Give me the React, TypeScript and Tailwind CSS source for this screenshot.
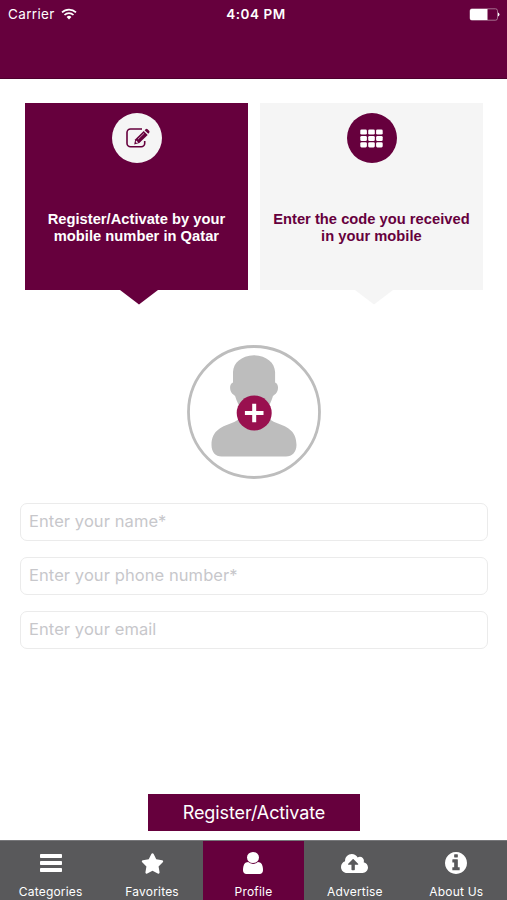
import React from "react";
import { FaCloudUploadAlt, FaStar } from "react-icons/fa";

interface StepCardProps {
  active?: boolean;
  icon: React.ReactNode;
  lines: string[];
}

interface TabProps {
  label: string;
  active?: boolean;
  icon: React.ReactNode;
}

const StatusBar: React.FunctionComponent = () => (
  <div className="grid grid-cols-3 items-center h-[27px] pl-2 pr-[7px] text-white">
    <div className="flex items-center gap-[6px]">
      <span className="text-[13.5px] leading-7 tracking-[0.35px]">Carrier</span>
      <svg width="16" height="12" viewBox="0 0 16 12" fill="none">
        <path d="M1 4.400a10 10 0 0 1 14 0" stroke="currentColor" strokeWidth="1.700" />
        <path d="M3.500 7a6.400 6.400 0 0 1 9 0" stroke="currentColor" strokeWidth="1.700" />
        <path d="M8 11.400 5.600 9a3.400 3.400 0 0 1 4.800 0z" fill="currentColor" />
      </svg>
    </div>
    <span className="pl-[4px] text-center text-[13.5px] leading-7 font-semibold tracking-[0.55px] whitespace-nowrap">
      4:04 PM
    </span>
    <svg className="justify-self-end" width="31" height="13" viewBox="0 0 31 13">
      <rect x="1" y="0.800" width="27.500" height="11.400" rx="2" fill="none" stroke="#b58aa3" strokeWidth="0.800" />
      <path d="M2.500 1H18.500v11H2.500A1.500 1.500 0 0 1 1 10.500v-8A1.500 1.500 0 0 1 2.500 1z" fill="#fff" />
      <path d="M29 4.500a2.100 2.100 0 0 1 0 4z" fill="#fff" />
    </svg>
  </div>
);

const EditIcon: React.FunctionComponent = () => (
  <svg className="ml-[3px]" width="26" height="22" viewBox="0 0 26 22" fill="none">
    <path
      d="M17 2H5.500A3.500 3.500 0 0 0 2 5.500v10.800a3.500 3.500 0 0 0 3.500 3.500h10.700a3.500 3.500 0 0 0 3.500-3.500V14"
      stroke="#66003d"
      strokeWidth="1.600"
    />
    <path d="m10.300 12.300 8.400-8.200 4 3.800-8.400 8.200-5.100 1.400z" fill="#66003d" />
    <path d="m19.600 3.200 1-.9q1-.9 2 0l1.500 1.400q1 1 .1 2l-.9 1z" fill="#66003d" />
    <path d="m12.900 12.300 6.200-6.100" stroke="#d9bfce" strokeWidth="0.800" />
    <path d="m11.200 13.500 2 2-1.600.5-.9-.9z" fill="#f5f5f5" />
  </svg>
);

const KeypadIcon: React.FunctionComponent = () => (
  <svg width="23" height="19" viewBox="0 0 23 19" fill="#fff">
    {[0.5, 6.9, 13.3].map((y) =>
      [0.3, 8.2, 16.1].map((x) => (
        <rect key={`${x}-${y}`} x={x} y={y} width="6.600" height="5.100" rx="1.300" />
      ))
    )}
  </svg>
);

const StepCard: React.FunctionComponent<StepCardProps> = ({
  active,
  icon,
  lines,
}) => (
  <div
    className={`relative flex flex-col items-center w-[222.5px] h-[187px] pt-[10px] ${
      active ? "bg-[#66003d] text-white" : "bg-[#f5f5f5] text-[#66003d]"
    }`}
  >
    <div
      className={`flex items-center justify-center size-[50px] ml-px rounded-full ${
        active ? "bg-[#f5f5f5]" : "bg-[#66003d]"
      }`}
    >
      {icon}
    </div>
    <div className="mt-[48px] text-center font-['Liberation_Sans'] font-bold text-[14.7px] leading-[17px] tracking-[0.02px] whitespace-nowrap">
      {lines.map((line) => (
        <p key={line}>{line}</p>
      ))}
    </div>
    <svg
      className="absolute top-full left-[95px]"
      width="38"
      height="15"
      viewBox="0 0 38 15"
    >
      <path d="M0 0h38L19 14.500z" className={active ? "fill-[#66003d]" : "fill-[#f5f5f5]"} />
    </svg>
  </div>
);

const Avatar: React.FunctionComponent = () => (
  <svg width="134" height="134" viewBox="0 0 134 134">
    <circle cx="67" cy="67" r="65.500" fill="#fff" stroke="#bdbdbd" strokeWidth="2.800" />
    <path
      d="M67 10.300C54 10.800 46.500 18 46 27v10.500c-4.500 1.500-3.500 10.500 1 12.500.8.500 1.300 1 1.600 2.500C50.500 59 54 62 54 67c0 6-3 8.500-8 10.500-10 4-21.500 7-21.500 22.500 0 7 4 11.500 10 11.500H99c6 0 10.500-4.500 10.500-11.500 0-15.500-11-18.500-21-22.500-5-2-8-4.500-8-10.500 0-5 3-8 5-14.500.3-1.500.8-2 1.600-2.500 4.500-2 5.500-11 1-12.500V27c-.5-9-8-16.200-21.100-16.700z"
      fill="#bdbdbd"
    />
    <circle cx="67.200" cy="68" r="17.500" fill="#99104f" />
    <path d="M67.200 58.700v18.600M57.900 68h18.600" stroke="#fff" strokeWidth="4" />
  </svg>
);

const MenuIcon: React.FunctionComponent = () => (
  <svg width="22" height="20" viewBox="0 0 22 20" fill="currentColor">
    <rect y="1" width="22" height="4" rx="0.800" />
    <rect y="8" width="22" height="4" rx="0.800" />
    <rect y="15" width="22" height="4" rx="0.800" />
  </svg>
);

const UserIcon: React.FunctionComponent = () => (
  <svg width="20" height="22" viewBox="0 128 1280 1536" preserveAspectRatio="none" fill="currentColor">
    <path d="M1280 1399q0 109-62.500 187t-150.500 78h-854q-88 0-150.500-78t-62.500-187q0-85 8.500-160.500t31.500-152 58.500-131 94-89 134.500-34.500q131 128 313 128t313-128q76 0 134.500 34.500t94 89 58.500 131 31.500 152 8.500 160.500zm-256-887q0 159-112.500 271.500t-271.500 112.500-271.500-112.500-112.500-271.500 112.500-271.500 271.500-112.500 271.500 112.500 112.500 271.500z" />
  </svg>
);

const InfoIcon: React.FunctionComponent = () => (
  <svg width="22" height="22" viewBox="128 128 1536 1536" fill="currentColor">
    <path d="M1152 1376v-160q0-14-9-23t-23-9h-96v-512q0-14-9-23t-23-9h-320q-14 0-23 9t-9 23v160q0 14 9 23t23 9h96v320h-96q-14 0-23 9t-9 23v160q0 14 9 23t23 9h448q14 0 23-9t9-23zm-128-896v-160q0-14-9-23t-23-9h-192q-14 0-23 9t-9 23v160q0 14 9 23t23 9h192q14 0 23-9t9-23zm640 416q0 209-103 385.500t-279.500 279.500-385.500 103-385.500-103-279.500-279.500-103-385.500 103-385.500 279.500-279.500 385.500-103 385.500 103 279.500 279.500 103 385.500z" />
  </svg>
);

const Tab: React.FunctionComponent<TabProps> = ({ label, active, icon }) => (
  <button
    className={`flex flex-col items-center pt-[8px] text-white ${
      active ? "bg-[#66003d]" : ""
    }`}
  >
    <span className="flex items-center justify-center h-7">{icon}</span>
    <span className="mt-[7px] text-[12px] leading-4 tracking-[0.2px] whitespace-nowrap">
      {label}
    </span>
  </button>
);

const fields = ["Enter your name*", "Enter your phone number*", "Enter your email"];

const App: React.FunctionComponent = () => {
  return (
    <div className="flex flex-col w-[507px] h-[900px] overflow-hidden bg-white font-['Inter',sans-serif]">
      <header className="h-[79px] shrink-0 bg-[#66003d] border-b border-[#4d002e]">
        <StatusBar />
      </header>

      <div className="flex gap-[12.5px] pl-[25.2px] pt-[24.4px]">
        <StepCard
          active
          icon={<EditIcon />}
          lines={["Register/Activate by your", "mobile number in Qatar"]}
        />
        <StepCard
          icon={<KeypadIcon />}
          lines={["Enter the code you received", "in your mobile"]}
        />
      </div>

      <div className="flex justify-center mt-[54.6px]">
        <Avatar />
      </div>

      <form className="flex flex-col gap-4 mt-6 pl-5 pr-[19px]">
        {fields.map((field) => (
          <input
            key={field}
            placeholder={field}
            className="h-[38px] w-full px-2 pb-[1px] rounded-[7px] border border-[#ebebeb] text-[16.5px] tracking-[0.08px] outline-none placeholder:text-[#c7c7cb]"
          />
        ))}
      </form>

      <button className="mt-auto mb-[9px] ml-[148px] w-[212px] h-[37px] shrink-0 bg-[#66003d] text-white text-[18px] tracking-[-0.12px] whitespace-nowrap">
        Register/Activate
      </button>

      <nav className="grid grid-cols-5 h-[60px] shrink-0 bg-[#59595b] border-t border-[#77777a]">
        <Tab label="Categories" icon={<MenuIcon />} />
        <Tab label="Favorites" icon={<FaStar className="size-[23px]" />} />
        <Tab label="Profile" active icon={<UserIcon />} />
        <Tab label="Advertise" icon={<FaCloudUploadAlt className="size-[27px]" />} />
        <Tab label="About Us" icon={<InfoIcon />} />
      </nav>
    </div>
  );
};

export default App;
